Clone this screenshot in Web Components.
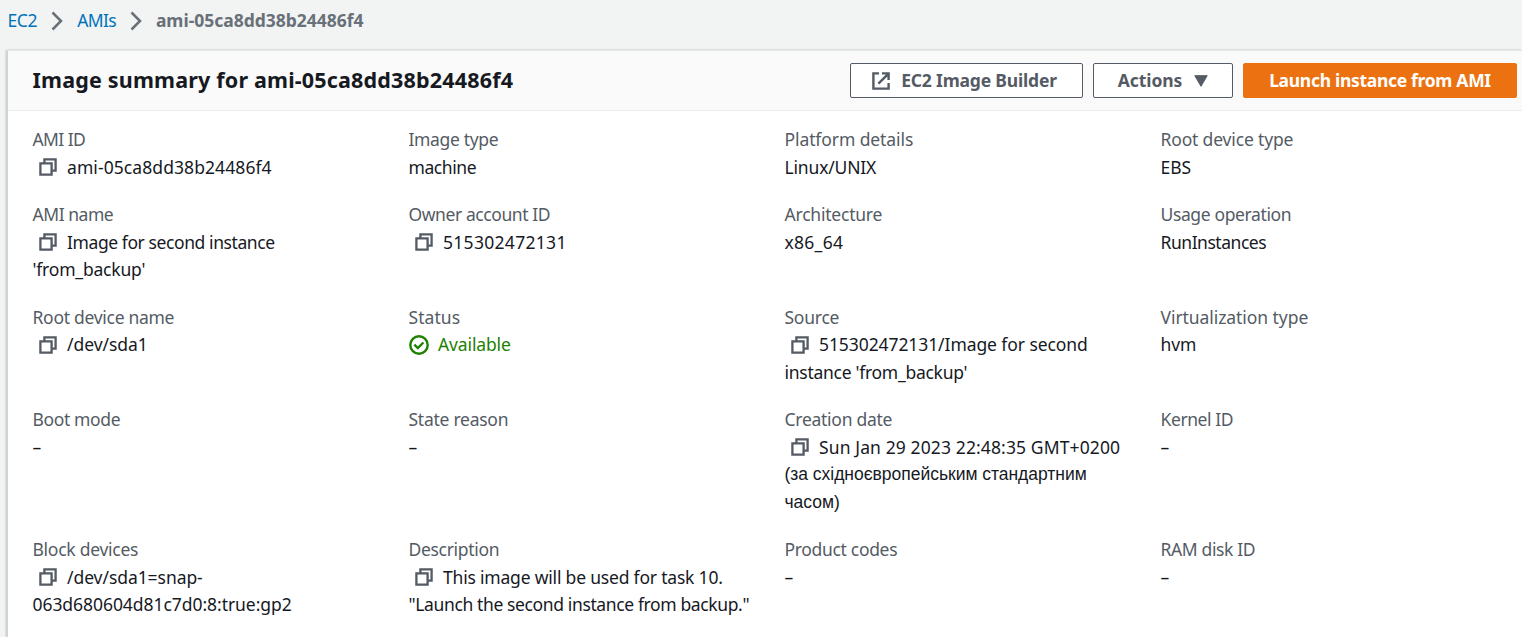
<!DOCTYPE html>
<html lang="en">
<head>
<meta charset="utf-8">
<title>Image summary</title>
<style>
body{margin:0;background:#f2f3f3;overflow:hidden;font-family:"Noto Sans","Liberation Sans",sans-serif;font-size:17.5px;line-height:27.5px;color:#16191f}
</style>
</head>
<body>
<ami-page>
  <crumb-trail slot="crumbs">
    <text-line w="30">EC2</text-line><crumb-arrow></crumb-arrow>
    <text-line w="39">AMIs</text-line><crumb-arrow></crumb-arrow>
    <text-line class="current" w="208">ami-05ca8dd38b24486f4</text-line>
  </crumb-trail>
  <summary-panel>
    <text-line slot="title" w="481">Image summary for ami-05ca8dd38b24486f4</text-line>
    <ui-button slot="actions" icon="external" style="width:233px"><text-line w="156">EC2 Image Builder</text-line></ui-button>
    <ui-button slot="actions" icon="caret" style="width:140px"><text-line w="65">Actions</text-line></ui-button>
    <ui-button slot="actions" primary style="width:274px"><text-line w="222">Launch instance from AMI</text-line></ui-button>

    <key-value><text-line slot="label" w="53">AMI ID</text-line><text-line icon="copy" w="205">ami-05ca8dd38b24486f4</text-line></key-value>
    <key-value><text-line slot="label" w="90">Image type</text-line><text-line w="68">machine</text-line></key-value>
    <key-value><text-line slot="label" w="129">Platform details</text-line><text-line w="92">Linux/UNIX</text-line></key-value>
    <key-value><text-line slot="label" w="133">Root device type</text-line><text-line w="31">EBS</text-line></key-value>

    <key-value><text-line slot="label" w="81">AMI name</text-line><text-line icon="copy" w="208">Image for second instance</text-line><text-line w="113">'from_backup'</text-line></key-value>
    <key-value><text-line slot="label" w="142">Owner account ID</text-line><text-line icon="copy" w="124">515302472131</text-line></key-value>
    <key-value><text-line slot="label" w="98">Architecture</text-line><text-line w="59">x86_64</text-line></key-value>
    <key-value><text-line slot="label" w="131">Usage operation</text-line><text-line w="106">RunInstances</text-line></key-value>

    <key-value><text-line slot="label" w="142">Root device name</text-line><text-line icon="copy" w="81">/dev/sda1</text-line></key-value>
    <key-value><text-line slot="label" w="52">Status</text-line><text-line class="ok" icon="check" w="73">Available</text-line></key-value>
    <key-value><text-line slot="label" w="55">Source</text-line><text-line icon="copy" w="269">515302472131/Image for second</text-line><text-line w="183">instance 'from_backup'</text-line></key-value>
    <key-value><text-line slot="label" w="148">Virtualization type</text-line><text-line w="36">hvm</text-line></key-value>

    <key-value><text-line slot="label" w="88">Boot mode</text-line><text-line w="10">–</text-line></key-value>
    <key-value><text-line slot="label" w="100">State reason</text-line><text-line w="10">–</text-line></key-value>
    <key-value><text-line slot="label" w="108">Creation date</text-line><text-line icon="copy" w="301.5">Sun Jan 29 2023 22:48:35 GMT+0200</text-line><text-line class="cyr" w="302.5">(за східноєвропейським стандартним</text-line><text-line class="cyr" w="55.5">часом)</text-line></key-value>
    <key-value><text-line slot="label" w="73">Kernel ID</text-line><text-line w="10">–</text-line></key-value>

    <key-value><text-line slot="label" w="106">Block devices</text-line><text-line icon="copy" w="136">/dev/sda1=snap-</text-line><text-line w="259.5">063d680604d81c7d0:8:true:gp2</text-line></key-value>
    <key-value><text-line slot="label" w="91">Description</text-line><text-line icon="copy" w="280">This image will be used for task 10.</text-line><text-line w="341">"Launch the second instance from backup."</text-line></key-value>
    <key-value><text-line slot="label" w="113">Product codes</text-line><text-line w="10">–</text-line></key-value>
    <key-value><text-line slot="label" w="95">RAM disk ID</text-line><text-line w="10">–</text-line></key-value>
  </summary-panel>
</ami-page>
<script>
const icons = {
  copy: '<svg class="copy" width="18" height="18" viewBox="0 0 18 18" fill="none" stroke="#545b64" stroke-width="2.3"><path d="M1.4 5.4h11.2v11.2H1.4zM5.4 5.4V1.4h11.2v11.2h-4"/></svg>',
  check: '<svg class="check" width="20" height="20" viewBox="0 0 20 20" fill="none" stroke="#1d8102" stroke-width="2.4"><circle cx="10" cy="10" r="8.7"/><path d="M5.4 9.7l3.4 3.3 5.6-5.5"/></svg>',
  external: '<svg width="18" height="18" viewBox="0 0 18 18" fill="none" stroke="#545b64" stroke-width="2.4"><path d="M7 1.4H1.4v15.2h15.2V11M10 1.4h6.6V8M16.3 1.8L6.4 11.7"/></svg>',
  caret: '<svg width="14" height="12" viewBox="0 0 14 12"><path d="M.8.7h12.4L7 11.3z" fill="#545b64" stroke="#545b64" stroke-linejoin="round"/></svg>'
};
function define(name, html, ready) {
  customElements.define(name, class extends HTMLElement {
    constructor() { super(); this.attachShadow({mode: 'open'}).innerHTML = html(this); }
    connectedCallback() { if (ready) ready(this); }
  });
}
define('ami-page', () => `<style>:host{display:flex;flex-direction:column;height:637px}::slotted(summary-panel){flex:1}</style><slot name="crumbs"></slot><slot></slot>`);
define('crumb-trail', () => `<style>
:host{display:flex;align-items:center;height:42px;flex:none;padding-left:7.5px;margin-bottom:8px;color:#0073bb}
::slotted(.current){color:#687078;font-weight:700}
</style><slot></slot>`);
define('crumb-arrow', () => `<style>:host{display:flex;width:40px;justify-content:center}</style>
<svg width="12" height="20" viewBox="0 0 12 20" fill="none" stroke="#687078" stroke-width="2.5"><path d="M1.5 1.5l8.5 8.5-8.5 8.5"/></svg>`);
define('summary-panel', () => `<style>
:host{display:flex;flex-direction:column;box-sizing:border-box;margin-left:7px;background:#fff;border-left:1px solid #cfd3d3;border-top:1px solid #e4e7e7;box-shadow:-1px 0 2px rgba(0,28,36,.22)}
header{display:flex;align-items:center;box-sizing:border-box;height:60px;flex:none;background:#fafafa;border-bottom:1px solid #eaeded;padding:0 5px 0 24.5px}
h1{flex:1;margin:0;padding-bottom:2px;font-size:21.5px;line-height:27.5px;font-weight:700}
.actions{display:flex;gap:10px}
.grid{display:grid;grid-template-columns:repeat(4,376px);row-gap:20px;padding:15px 0 0 24.5px;width:1504px}
</style><header><h1><slot name="title"></slot></h1><div class="actions"><slot name="actions"></slot></div></header><div class="grid"><slot></slot></div>`);
define('ui-button', el => `<style>
:host{display:flex;align-items:center;justify-content:center;box-sizing:border-box;height:35px;border:1px solid #545b64;border-radius:2px;background:#fff;color:#545b64;font-weight:700;gap:12px}
:host([icon=external]){gap:11px;padding-right:4px}
:host([primary]){background:#ec7211;border-color:#ec7211;color:#fff}
</style>${el.getAttribute('icon') === 'external' ? icons.external : ''}<slot></slot>${el.getAttribute('icon') === 'caret' ? icons.caret : ''}`);
define('key-value', () => `<style>
:host{display:flex;flex-direction:column}
.label{color:#545b64}
::slotted(.ok){color:#1d8102}
::slotted(.cyr){font-family:"Liberation Sans",sans-serif}
</style><div class="label"><slot name="label"></slot></div><slot></slot>`);
/* A single line of text, tracked so that its width equals the w attribute. */
const lines = [];
define('text-line', el => `<style>
:host{display:flex;align-items:center;white-space:nowrap}
span{display:inline-block}
svg{flex:none}
.copy{margin:0 10.5px 0 6px}
.check{margin-right:9.5px}
</style>${icons[el.getAttribute('icon')] || ''}<span><slot></slot></span>`, el => lines.push(el));
for (const el of lines) {
  const span = el.shadowRoot.querySelector('span');
  const n = el.textContent.length;
  if (n < 2) continue;
  const gap = (Number(el.getAttribute('w')) - 0.3 - span.getBoundingClientRect().width) / n;
  span.style.letterSpacing = gap.toFixed(3) + 'px';
}
</script>
</body>
</html>
